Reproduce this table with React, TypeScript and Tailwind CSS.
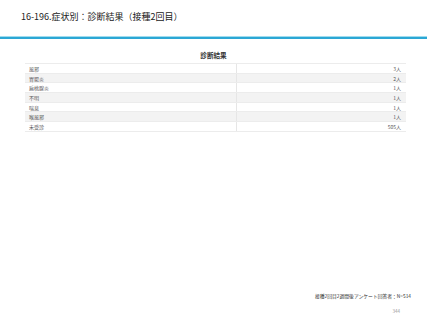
const rows = [
  { label: "風邪", value: "3人" },
  { label: "胃腸炎", value: "2人" },
  { label: "扁桃腺炎", value: "1人" },
  { label: "不明", value: "1人" },
  { label: "喘息", value: "1人" },
  { label: "喉風邪", value: "1人" },
  { label: "未受診", value: "505人" },
];

const font = { fontFamily: '"Noto Sans CJK JP", "Noto Sans", sans-serif' };

const App = () => {
  return (
    <div className="w-[427px] h-[320px] bg-white flex flex-col overflow-hidden" style={font}>
      {/* header */}
      <div className="h-[36px] pl-[21px] pt-[11px]">
        <h1 className="text-[9px] leading-[12px] text-[#222]">16-196.症状別：診断結果（接種2回目）</h1>
      </div>
      <div className="h-[1px] bg-[#9fdcee]" />
      <div className="h-[2px] bg-[#2ba7d5]" />

      {/* table */}
      <div className="mt-[12px] text-center text-[6.6px] leading-[9px] font-bold text-[#333]">診断結果</div>
      <div className="mt-[3px] ml-[25px] mr-[21px] border-t border-[#ececec]">
        {rows.map((r, i) => (
          <div
            key={r.label}
            className={`flex h-[9.7px] items-center border-b border-[#ececec] text-[5px] leading-[7px] text-[#555] ${
              i % 2 === 1 ? "bg-[#f3f3f3]" : "bg-white"
            }`}
          >
            <div className="w-[212px] h-full flex items-center pl-[4px] border-r border-[#e6e6e6]">{r.label}</div>
            <div className="flex-1 text-right pr-[5px]">{r.value}</div>
          </div>
        ))}
      </div>

      {/* footer */}
      <div className="mt-auto flex flex-col items-end pb-[6px]">
        <div className="pr-[16px] text-[4.8px] leading-[7px] text-[#333]">接種2回目2週間後アンケート回答者：N=514</div>
        <div className="pr-[27px] mt-[9px] text-[4.5px] leading-[6px] text-[#999]">344</div>
      </div>
    </div>
  );
};

export default App;
